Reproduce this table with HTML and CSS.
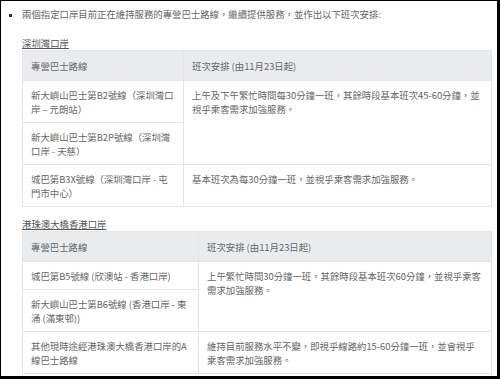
FILE: index.html
```html
<!DOCTYPE html>
<html lang="zh-Hant">
<head>
<meta charset="utf-8">
<link rel="stylesheet" href="styles.css">
</head>
<body>
<div class="frame">
  <ul class="list">
    <li class="item">
      <p class="intro">兩個指定口岸目前正在維持服務的專營巴士路線，繼續提供服務，並作出以下班次安排:</p>
      <p class="caption">深圳灣口岸</p>
      <table class="routes routes-a">
        <colgroup><col class="c1"><col></colgroup>
        <thead>
          <tr><th>專營巴士路線</th><th class="r">班次安排 (由11月23日起)</th></tr>
        </thead>
        <tbody>
          <tr><td>新大嶼山巴士第B2號線（深圳灣口岸 – 元朗站）</td><td rowspan="2" class="r">上午及下午繁忙時間每30分鐘一班，其餘時段基本班次45-60分鐘，並視乎乘客需求加強服務。</td></tr>
          <tr><td>新大嶼山巴士第B2P號線（深圳灣口岸 - 天慈）</td></tr>
          <tr><td>城巴第B3X號線（深圳灣口岸 - 屯門市中心）</td><td class="r">基本班次為每30分鐘一班，並視乎乘客需求加強服務。</td></tr>
        </tbody>
      </table>
      <p class="caption caption-2">港珠澳大橋香港口岸</p>
      <table class="routes routes-b">
        <colgroup><col class="c1"><col></colgroup>
        <thead>
          <tr><th>專營巴士路線</th><th class="r">班次安排 (由11月23日起)</th></tr>
        </thead>
        <tbody>
          <tr><td class="single">城巴第B5號線 (欣澳站 - 香港口岸)</td><td rowspan="2" class="r">上午繁忙時間30分鐘一班，其餘時段基本班次60分鐘，並視乎乘客需求加強服務。</td></tr>
          <tr><td>新大嶼山巴士第B6號線 (香港口岸 - 東涌 (滿東邨))</td></tr>
          <tr><td>其他現時途經港珠澳大橋香港口岸的A線巴士路線</td><td class="r">維持目前服務水平不變，即視乎線路約15-60分鐘一班，並會視乎乘客需求加強服務。</td></tr>
        </tbody>
      </table>
    </li>
  </ul>
</div>
</body>
</html>
```
FILE: styles.css
```css
html, body {
  margin: 0;
  padding: 0;
  background: #000;
}
.frame {
  margin: 1px 3px 0 1px;
  height: 375px;
  background: #fff;
  overflow: hidden;
  font-family: "Noto Sans CJK TC", "Noto Sans", sans-serif;
  font-size: 9.4px;
  color: #666;
  line-height: 14px;
}
.list {
  margin: 0;
  padding: 0 0 0 21px;
  list-style: square;
}
.item::marker {
  color: #333;
  font-size: 9px;
}
.intro {
  margin: 6px 0 0;
}
.caption {
  margin: 15px 0 0;
  text-decoration: underline;
  color: #555;
}
.caption-2 {
  margin-top: 10px;
}
.routes {
  width: 470px;
  border-collapse: collapse;
  table-layout: fixed;
  margin: 0;
}
.routes th, .routes td {
  border: 1px solid #e3e6e9;
  padding: 7px 6px 6px 8px;
  text-align: left;
  font-weight: normal;
  vertical-align: top;
}
.routes th {
  background: #e9ecef;
  padding-top: 8px;
  padding-bottom: 7px;
}
.routes-a .c1 { width: 161px; }
.routes-b .c1 { width: 176px; }
.routes-a td.r { padding-right: 6px; }
.routes-b td.r { padding-right: 10px; }
```
